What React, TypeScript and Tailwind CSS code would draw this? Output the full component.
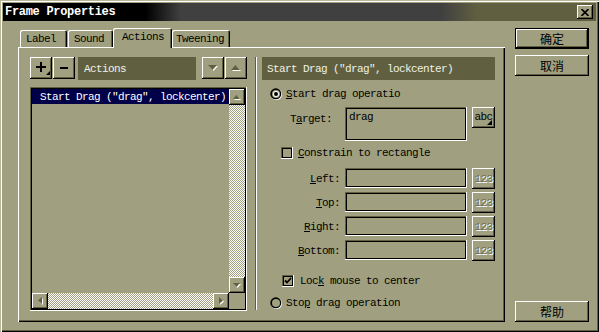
import { JSX, ReactNode } from "react";

// shared looks (win95 bevels in an olive palette)
const mono = "font-['Liberation_Mono',monospace] text-[11px] leading-[12px] tracking-[-0.6px]";
const cjk = "font-['Noto_Sans_CJK_SC','Noto_Sans_CJK_JP',sans-serif] text-[12px] leading-[14px]";
const raised = "shadow-[inset_-1px_-1px_#000,inset_1px_1px_#fff,inset_-2px_-2px_#606040]";
const sunken = "shadow-[inset_-1px_-1px_#fff,inset_1px_1px_#606040,inset_-2px_-2px_#000,inset_2px_2px_#000]";
const checker = "bg-[image:repeating-conic-gradient(#fff_0_25%,#a0a080_0_50%)] bg-[length:2px_2px]";

type Dir = "up" | "down" | "left" | "right";

const Tri = ({ dir, w, h }: { dir: Dir; w: number; h: number }): JSX.Element => {
  const vertical = dir === "up" || dir === "down";
  const sw = vertical ? w : h;
  const sh = vertical ? h : w;
  const pts: Record<Dir, string> = {
    down: `0,0 ${w},0 ${w / 2},${h}`,
    up: `0,${h} ${w},${h} ${w / 2},0`,
    left: `${h},0 ${h},${w} 0,${w / 2}`,
    right: `0,0 0,${w} ${h},${w / 2}`,
  };
  return (
    <svg width={sw + 1} height={sh + 1} viewBox={`0 0 ${sw + 1} ${sh + 1}`}>
      <polygon points={pts[dir]} fill="#fff" transform="translate(1 1)" />
      <polygon points={pts[dir]} fill="#606040" />
    </svg>
  );
};

const ScrollBtn = ({ dir }: { dir: Dir }): JSX.Element => (
  <div className={`flex h-[16px] w-[16px] shrink-0 items-center justify-center bg-[#a0a080] ${raised}`}>
    <Tri dir={dir} w={7} h={4} />
  </div>
);

const Radio = ({ on }: { on?: boolean }): JSX.Element => (
  <svg width="13" height="13" viewBox="0 0 13 13" className="shrink-0">
    <circle cx="6.5" cy="6.5" r="5.5" fill="#fff" />
    <circle cx="5.8" cy="5.8" r="5.5" fill="#000" />
    <circle cx="6" cy="6" r="4" fill="#a0a080" />
    {on && <circle cx="6" cy="6" r="3" fill="#fff" />}
    {on && <circle cx="6" cy="6" r="2" fill="#000" />}
  </svg>
);

const Check = ({ on }: { on?: boolean }): JSX.Element => (
  <div className={`flex h-[12px] w-[12px] shrink-0 items-center justify-center bg-[#a0a080] ${sunken}`}>
    {on && (
      <svg width="8" height="8" viewBox="0 0 8 8">
        <path d="M1 3.5 L3 5.5 L7 1" stroke="#000" strokeWidth="1.8" fill="none" />
      </svg>
    )}
  </div>
);

const Tab = ({ children, cls, active }: { children: ReactNode; cls: string; active?: boolean }): JSX.Element => (
  <div
    className={`${cls} ${active ? "relative z-10 -mb-[1px] h-[20px] pb-[2px]" : "h-[17px]"} flex items-center rounded-t-[2px] bg-[#a0a080] shadow-[inset_1px_1px_#fff,inset_-1px_0_#000,inset_-2px_0_#606040] ${mono}`}
  >
    {children}
  </div>
);

const Field = ({ label, pr = "pr-[5px]" }: { label: ReactNode; pr?: string }): JSX.Element => (
  <div className="flex h-[21px] items-center">
    <div className={`w-[83px] text-right ${pr} ${mono}`}>{label}</div>
    <div className={`h-[20px] w-[122px] self-start ${sunken}`} />
    <div className={`ml-[5px] flex h-[21px] w-[23px] items-center justify-center ${raised} ${mono} text-[#707050] [text-shadow:1px_1px_0_#fff]`}>
      123
    </div>
  </div>
);

export default function App(): JSX.Element {
  return (
    <div className="flex h-[332px] w-[599px] flex-col bg-[#a0a080] p-[3px] text-black shadow-[inset_1px_1px_#b8b898,inset_2px_2px_#fff,inset_-1px_-1px_#000,inset_-2px_-2px_#606040]">
      {/* title bar */}
      <div className="flex h-[18px] shrink-0 items-center justify-between bg-[linear-gradient(90deg,#000_0%,#000_24%,#404040_30%,#404040_74%,#606040_80%,#606040_100%)]">
        <span className="ml-[2px] font-['Liberation_Mono',monospace] text-[12px] font-bold tracking-[-0.3px] text-white">
          Frame Properties
        </span>
        <div className={`mr-[3px] flex h-[14px] w-[16px] items-center justify-center bg-[#a0a080] ${raised}`}>
          <svg width="8" height="7" viewBox="0 0 8 7">
            <path d="M0.5 0 L7.5 7 M7.5 0 L0.5 7" stroke="#000" strokeWidth="1.6" />
          </svg>
        </div>
      </div>

      <div className="ml-[15px] mt-[7px] flex">
        {/* tabs + panel */}
        <div className="flex w-[487px] flex-col">
          <div className="flex h-[19px] items-end pl-[2px]">
            <Tab cls="w-[47px] pl-[6px]">Label</Tab>
            <Tab cls="ml-[1px] w-[45px] pl-[6px]">Sound</Tab>
            <Tab cls="w-[59px] pl-[9px]" active>
              Actions
            </Tab>
            <Tab cls="w-[58px] pl-[4px]">Tweening</Tab>
          </div>

          <div className="flex h-[275px] pl-[12px] pt-[10px] shadow-[inset_1px_1px_#fff,inset_-1px_-1px_#000,inset_-2px_-2px_#606040]">
            {/* action list */}
            <div className="flex w-[217px] flex-col">
              <div className="flex h-[23px]">
                <div className={`h-[22px] w-[22px] ${raised}`}>
                  <svg width="22" height="22" viewBox="0 0 22 22">
                    <rect x="6" y="9" width="10" height="2" fill="#000" />
                    <rect x="10" y="5" width="2" height="10" fill="#000" />
                    <polygon points="16,18 20,14 20,18" fill="#000" />
                  </svg>
                </div>
                <div className={`ml-[1px] h-[22px] w-[22px] ${raised}`}>
                  <svg width="22" height="22" viewBox="0 0 22 22">
                    <rect x="7" y="10" width="8" height="2" fill="#000" />
                  </svg>
                </div>
                <div className={`ml-[3px] flex h-[23px] w-[118px] items-center bg-[#606040] pl-[6px] text-[#f0f0e8] ${mono}`}>
                  Actions
                </div>
                <div className={`ml-[6px] flex h-[22px] w-[22px] items-center justify-center ${raised}`}>
                  <Tri dir="down" w={9} h={5} />
                </div>
                <div className={`ml-[1px] flex h-[22px] w-[22px] items-center justify-center ${raised}`}>
                  <Tri dir="up" w={9} h={5} />
                </div>
              </div>

              <div className={`mt-[7px] flex h-[224px] flex-col p-[2px] ${sunken}`}>
                <div className="flex min-h-0 flex-1">
                  <div className="flex-1">
                    <div className={`flex h-[15px] items-center bg-[#000048] pl-[8px] text-white ${mono}`}>
                      {'Start Drag ("drag", lockcenter)'}
                    </div>
                  </div>
                  <div className="flex w-[16px] flex-col">
                    <ScrollBtn dir="up" />
                    <div className={`flex-1 ${checker}`} />
                    <ScrollBtn dir="down" />
                  </div>
                </div>
                <div className="flex h-[16px]">
                  <ScrollBtn dir="left" />
                  <div className={`flex-1 ${checker}`} />
                  <ScrollBtn dir="right" />
                  <div className="w-[16px]" />
                </div>
              </div>
            </div>

            <div className="ml-[8px] h-[253px] w-[2px] border-l border-r border-l-[#606040] border-r-white" />

            {/* parameters */}
            <div className="ml-[5px] flex w-[233px] flex-col">
              <div className={`flex h-[23px] items-center bg-[#606040] pl-[5px] text-[#f0f0e8] ${mono}`}>
                {'Start Drag ("drag", lockcenter)'}
              </div>

              <div className={`mt-[8px] flex h-[12px] items-center pl-[8px] ${mono}`}>
                <Radio on />
                <span className="ml-[3px]">
                  <u>S</u>tart drag operatio
                </span>
              </div>

              <div className="mt-[7px] flex h-[34px]">
                <div className={`w-[83px] pr-[13px] pt-[6px] text-right ${mono}`}>
                  T<u>a</u>rget:
                </div>
                <div className={`h-[34px] w-[122px] pl-[4px] pt-[4px] ${sunken} ${mono}`}>drag</div>
                <div className={`relative ml-[5px] flex h-[21px] w-[23px] items-center justify-center pb-[2px] ${raised} ${mono}`}>
                  abc
                  <svg width="5" height="5" viewBox="0 0 5 5" className="absolute bottom-[3px] right-[3px]">
                    <polygon points="0,5 5,0 5,5" fill="#000" />
                  </svg>
                </div>
              </div>

              <div className={`mt-[6px] flex h-[12px] items-center pl-[19px] ${mono}`}>
                <Check />
                <span className="ml-[5px]">
                  <u>C</u>onstrain to rectangle
                </span>
              </div>

              <div className="mt-[9px] flex flex-col gap-[3px]">
                <Field
                  label={
                    <>
                      <u>L</u>eft:
                    </>
                  }
                />
                <Field
                  label={
                    <>
                      <u>T</u>op:
                    </>
                  }
                />
                <Field
                  label={
                    <>
                      <u>R</u>ight:
                    </>
                  }
                />
                <Field
                  label={
                    <>
                      <u>B</u>ottom:
                    </>
                  }
                />
              </div>

              <div className={`mt-[14px] flex h-[12px] items-center pl-[20px] ${mono}`}>
                <Check on />
                <span className="ml-[6px]">
                  Loc<u>k</u> mouse to center
                </span>
              </div>

              <div className={`mt-[10px] flex h-[12px] items-center pl-[8px] ${mono}`}>
                <Radio />
                <span className="ml-[3px]">
                  Sto<u>p</u> drag operation
                </span>
              </div>
            </div>
          </div>
        </div>

        {/* dialog buttons */}
        <div className="ml-[10px] flex h-[294px] w-[74px] flex-col">
          <div className={`flex h-[21px] items-center justify-center border border-black ${raised} ${cjk}`}>确定</div>
          <div className={`mt-[6px] flex h-[21px] items-center justify-center ${raised} ${cjk}`}>取消</div>
          <div className={`mt-auto flex h-[21px] items-center justify-center ${raised} ${cjk}`}>帮助</div>
        </div>
      </div>
    </div>
  );
}
